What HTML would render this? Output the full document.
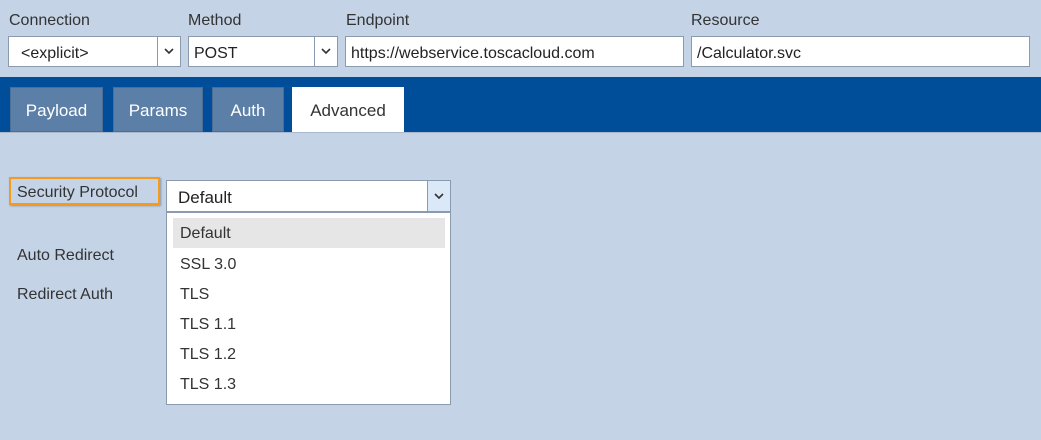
<!DOCTYPE html><html><head><style>
body{margin:0;width:1041px;height:440px;background:#c4d3e6;font-family:"Liberation Sans",sans-serif;position:relative;overflow:hidden;color:#333}
.a{position:absolute}
.lbl{font-size:16px;color:#333}
.in{background:#fff;border:1px solid #8a9bb0;box-sizing:border-box;font-size:16px;line-height:33px;padding-left:5px;color:#222}
.arr{position:absolute;right:0;top:0;bottom:0;width:22px;border-left:1px solid #8a9bb0;display:flex;align-items:center;justify-content:center}
.tab{position:absolute;top:87px;height:45px;background:#5b7fa6;color:#fff;font-size:17px;line-height:46px;text-align:center;border:1px solid #4a6e96;box-sizing:border-box}
.it{position:absolute;left:6px;width:272px;height:30px;line-height:31px;padding-left:7px;font-size:16px;color:#333;box-sizing:border-box}
</style></head><body>
<div class="a lbl" style="left:9px;top:12px">Connection</div>
<div class="a lbl" style="left:188px;top:12px">Method</div>
<div class="a lbl" style="left:346px;top:12px">Endpoint</div>
<div class="a lbl" style="left:691px;top:12px">Resource</div>
<div class="a in" style="left:8px;top:36px;width:173px;height:31px;padding-left:12px">&lt;explicit&gt;<div class="arr"><svg width="10" height="7"><path d="M1 1L5 5L9 1" stroke="#333" stroke-width="1.6" fill="none"/></svg></div></div>
<div class="a in" style="left:188px;top:36px;width:150px;height:31px">POST<div class="arr"><svg width="10" height="7"><path d="M1 1L5 5L9 1" stroke="#333" stroke-width="1.6" fill="none"/></svg></div></div>
<div class="a in" style="left:345px;top:36px;width:339px;height:31px">https://webservice.toscacloud.com</div>
<div class="a in" style="left:691px;top:36px;width:339px;height:31px">/Calculator.svc</div>
<div class="a" style="left:0;top:77px;width:1041px;height:55px;background:#004d99"></div>
<div class="tab" style="left:10px;width:93px">Payload</div>
<div class="tab" style="left:113px;width:90px">Params</div>
<div class="tab" style="left:212px;width:72px">Auth</div>
<div class="tab" style="left:292px;width:112px;height:46px;background:#fff;color:#333;border-color:#fff">Advanced</div>
<div class="a" style="left:0;top:132px;width:1041px;height:1px;background:#a9b8cc"></div>
<div class="a" style="left:9px;top:177px;width:151px;height:28px;border:2px solid #f59a1c;box-sizing:border-box;box-shadow:1px 1px 2px rgba(0,0,0,.3);font-size:16px;line-height:27px;padding-left:6px">Security Protocol</div>
<div class="a in" style="left:166px;top:180px;width:285px;height:32px;padding-left:11px;line-height:33px;font-size:17px">Default<div class="arr" style="background:#dbe8f7;width:22px"><svg width="10" height="7"><path d="M1 1L5 5L9 1" stroke="#333" stroke-width="1.6" fill="none"/></svg></div></div>
<div class="a lbl" style="left:17px;top:247px">Auto Redirect</div>
<div class="a lbl" style="left:17px;top:286px">Redirect Auth</div>
<div class="a" style="left:166px;top:212px;width:285px;height:193px;background:#fff;border:1px solid #8a9bb0;box-sizing:border-box">
<div class="it" style="top:5px;background:#e6e6e6">Default</div>
<div class="it" style="top:36px">SSL 3.0</div>
<div class="it" style="top:66px">TLS</div>
<div class="it" style="top:96px">TLS 1.1</div>
<div class="it" style="top:126px">TLS 1.2</div>
<div class="it" style="top:156px">TLS 1.3</div>
</div>
</body></html>
